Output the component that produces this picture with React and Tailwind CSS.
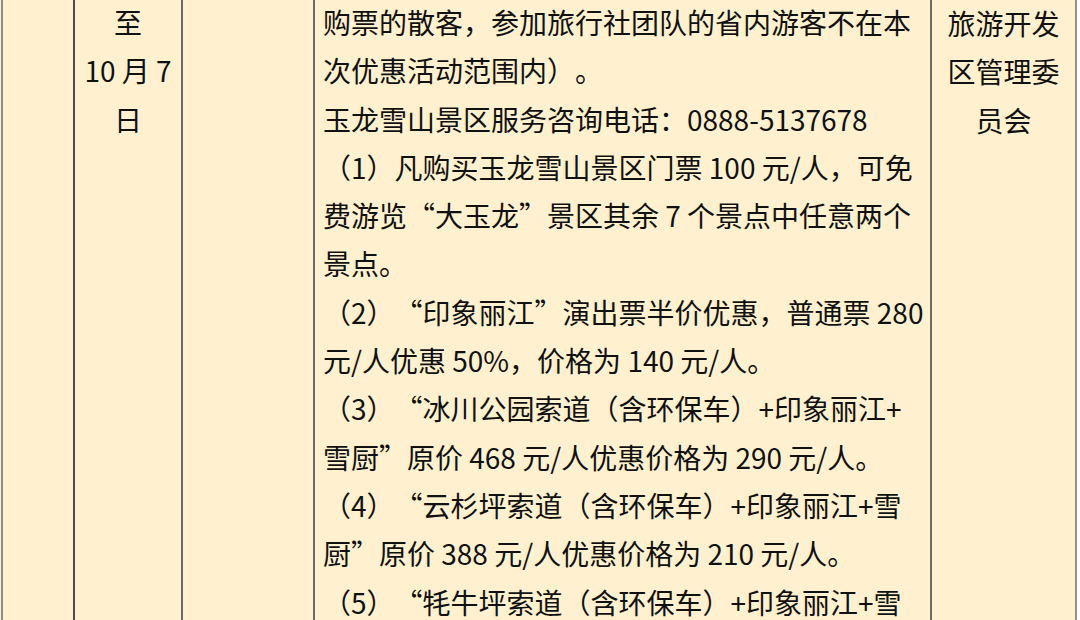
const lines = [
  '购票的散客，参加旅行社团队的省内游客不在本',
  '次优惠活动范围内）。',
  '玉龙雪山景区服务咨询电话：0888-5137678',
  '（1）凡购买玉龙雪山景区门票 100 元/人，可免',
  '费游览“大玉龙”景区其余 7 个景点中任意两个',
  '景点。',
  '（2）“印象丽江”演出票半价优惠，普通票 280',
  '元/人优惠 50%，价格为 140 元/人。',
  '（3）“冰川公园索道（含环保车）+印象丽江+',
  '雪厨”原价 468 元/人优惠价格为 290 元/人。',
  '（4）“云杉坪索道（含环保车）+印象丽江+雪',
  '厨”原价 388 元/人优惠价格为 210 元/人。',
  '（5）“牦牛坪索道（含环保车）+印象丽江+雪',
];

const font = { fontFamily: '"Noto Sans CJK SC", "Noto Sans", sans-serif' };

export default function App() {
  return (
    <div className="w-[1080px] h-[620px] overflow-hidden bg-white" style={font}>
      <div className="flex h-full w-[1077px] bg-[#fff1cf] text-[#111] text-[28px] leading-[48.3px] [text-spacing-trim:space-all]">
        {/* left edge */}
        <div className="w-[1px] bg-[#fff1cf]" />
        <div className="w-[74px] border-l-2 border-r-2 border-l-[#8e8e8e] border-r-[#4c4c4c]" />
        {/* date */}
        <div className="w-[108px] border-r-2 border-[#6a6a6a] flex flex-col items-center -mt-[2px]">
          <div>至</div>
          <div>10 月 7</div>
          <div>日</div>
        </div>
        <div className="w-[132px] border-r-2 border-[#6a6a6a]" />
        {/* details */}
        <div className="w-[617px] border-r-2 border-[#6a6a6a] pl-[8px] -mt-[2px]">
          {lines.map((l, i) => (
            <div key={i} className="whitespace-nowrap">{l}</div>
          ))}
        </div>
        {/* organizer */}
        <div className="flex-1 border-r-2 border-[#8e8e8e] flex flex-col items-center -mt-[1px]">
          <div>旅游开发</div>
          <div>区管理委</div>
          <div>员会</div>
        </div>
      </div>
    </div>
  );
}
